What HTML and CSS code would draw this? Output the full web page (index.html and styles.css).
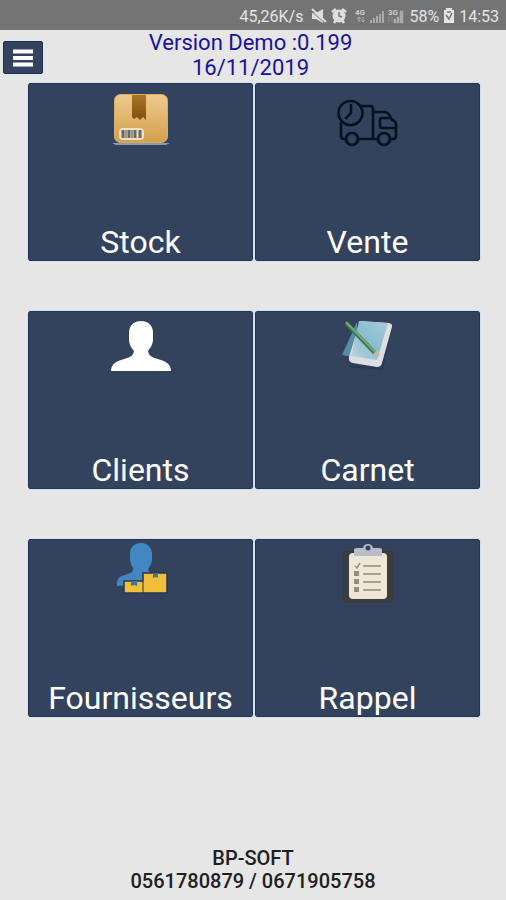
FILE: index.html
```html
<!DOCTYPE html>
<html lang="fr">
<head>
<meta charset="utf-8">
<meta name="viewport" content="width=device-width, initial-scale=1">
<title>BP-SOFT</title>
<link rel="stylesheet" href="styles.css">
</head>
<body>
<div class="status">
  <span class="speed">45,26K/s</span>
  <svg class="status-icon" width="16" height="16" viewBox="0 0 16 16" aria-hidden="true"><path d="M1 5h4l7-4v14l-7-4H1z" fill="#dedede"/><path d="M0 3l14 12" stroke="#747474" stroke-width="1"/><path d="M1 1l14 13" stroke="#dedede" stroke-width="2"/></svg>
  <svg class="status-icon" width="16" height="16" viewBox="0 0 16 16" aria-hidden="true"><path d="M1 4l4-3M15 4l-4-3M3 15l2-3M13 15l-2-3" stroke="#dedede" stroke-width="2.5"/><circle cx="8" cy="8" r="6.5" fill="#dedede"/><path d="M8 4v4l3 1" fill="none" stroke="#747474" stroke-width="1.5"/></svg>
  <svg class="status-icon network" width="50" height="16" viewBox="0 0 50 16" aria-hidden="true">
    <text class="network-label" x="0" y="7">4G</text>
    <path d="M4 9v5M2 11l2-2 2 2M8 9v5M6 12l2 2 2-2" fill="none" stroke="#aaa"/>
    <path d="M15 15v-3h2v3zM18 15v-5h2v5zM21 15V8h2v7zM24 15V6h2v9zM27 15V3h2v12z" fill="#aaa"/>
    <text class="network-label" x="33" y="7">3G</text>
    <path d="M34 9v5M37 9v5M39 15v-4h2v4zM42 15V9h2v6zM45 15V3h3v12z" fill="#aaa" stroke="#aaa" stroke-width=".5"/>
  </svg>
  <span>58%</span>
  <svg class="status-icon" width="12" height="16" viewBox="0 0 12 16" aria-hidden="true"><path d="M3 2V0h6v2h2v13H1V2z" fill="#e4e4e4"/><path d="M3 7l3 4 3-6M4 4h4" fill="none" stroke="#747474" stroke-width="1.5"/></svg>
  <span>14:53</span>
</div>

<header class="header">
  <button class="menu" type="button" aria-label="Menu">
    <svg width="20" height="18" viewBox="0 0 20 18" aria-hidden="true"><path d="M0 2.5h20M0 9h20M0 15.500h20" stroke="#fff" stroke-width="4"/></svg>
  </button>
  <h1 class="title">Version Demo :0.199<br>16/11/2019</h1>
</header>

<main class="tiles">
  <button class="tile" type="button">
    <svg class="tile-icon" width="60" height="60" viewBox="0 0 60 60" aria-hidden="true">
      <defs>
        <linearGradient id="box" x2="0" y2="1"><stop stop-color="#edca8d"/><stop offset="1" stop-color="#d4a04b"/></linearGradient>
        <linearGradient id="ribbon" x2="0" y2="1"><stop stop-color="#ac7427"/><stop offset="1" stop-color="#80500e"/></linearGradient>
      </defs>
      <path d="M1 53h58l-4 2H5z" fill="#8d9aaa"/>
      <rect x="3.500" y="4.500" width="53" height="48" rx="6" fill="url(#box)" stroke="#d9ae63"/>
      <path d="M21 5h14v25l-3-3-3 3-3-3-3 2-2-2z" fill="url(#ribbon)"/>
      <rect x="8" y="38" width="25" height="12" rx="4" fill="#efe0c2"/>
      <path d="M12 40v8M18 40v8M24 40v8M29 40v8" stroke="#696963" stroke-width="3"/>
      <path d="M15 40v8M21 40v8" stroke="#9b978d" stroke-width="2"/>
    </svg>
    <span>Stock</span>
  </button>
  <button class="tile" type="button">
    <svg class="tile-icon" width="60" height="60" viewBox="1 0 60 60" aria-hidden="true" fill="none" stroke="#07101d" stroke-width="2.600" stroke-linecap="round" stroke-linejoin="round">
      <circle cx="13.500" cy="23" r="12"/>
      <path d="M14 15v8l-5 5M24 16h9q3 0 3 3v30H22M4 33v13q0 3 3 3h2M36 22h11q4 0 6 4l2 4q4 1 4 5v11q0 3-3 3h-2M41 49h-5M54 28H45q-2 0-2 2v6q0 2 2 2h13"/>
      <circle cx="15" cy="49" r="6"/><circle cx="47" cy="49" r="6"/>
    </svg>
    <span>Vente</span>
  </button>
  <button class="tile" type="button">
    <svg class="tile-icon" width="60" height="60" viewBox="0 1 60 60" aria-hidden="true"><path d="M30 4c8 0 12 5 12 12v6c0 6-3 9-5 12 1 6 6 7 13 9 6 2 10 5 10 11H0c0-6 4-9 10-11 7-2 12-3 13-9-3-3-5-7-5-12v-6C18 9 22 4 30 4z" fill="#fff"/></svg>
    <span>Clients</span>
  </button>
  <button class="tile" type="button">
    <svg class="tile-icon" width="60" height="60" viewBox="1 2 60 60" aria-hidden="true">
      <defs><linearGradient id="sheet" x1="1" x2="0" y2="1"><stop stop-color="#a8ced9"/><stop offset=".5" stop-color="#8abcd0"/><stop offset="1" stop-color="#bfd5df"/></linearGradient></defs>
      <path d="M12 50l33 3 10-44" fill="none" stroke="#2b3a53" stroke-width="2"/>
      <path d="M20 6L5 39l16 3z" fill="#568da8"/>
      <path d="M23 5l29 2q4 1 3 4L45 47q-1 4-5 4l-24-4q-5-1-4-6z" fill="#dedfe2"/>
      <path d="M22 5l29 2-11 37-26-4z" fill="url(#sheet)"/>
      <path d="M9 7l29 30" stroke="#3e7349" stroke-width="4"/>
      <path d="M9 6l29 30" stroke="#75ad78" stroke-width="2"/>
      <path d="M40 34l3 6-7-2z" fill="#d0b490"/>
    </svg>
    <span>Carnet</span>
  </button>
  <button class="tile" type="button">
    <svg class="tile-icon" width="60" height="60" viewBox="0 7 60 60" aria-hidden="true">
      <path d="M30 4c7 0 11 5 11 11v5c0 5-3 8-4 11l4 5-13 9-22 2c-1-7 3-10 8-11 6-2 9-3 8-7-2-3-3-6-3-10v-4C19 8 23 4 30 4z" fill="#4387c2"/>
      <path d="M13 42h19v-8h24v20H13z" fill="#f2bf3d" stroke="#273650" stroke-width="1.500"/>
      <path d="M32 42v12" stroke="#273650"/>
      <path d="M20 42h6v5l-3-1-3 1zM42 34h5v5l-2-1-3 1z" fill="#45768c"/>
    </svg>
    <span>Fournisseurs</span>
  </button>
  <button class="tile" type="button">
    <svg class="tile-icon" width="60" height="60" viewBox="0 4 60 60" aria-hidden="true">
      <path d="M5 9h50v52H5z" fill="#3d3c3d"/>
      <rect x="11" y="11" width="38" height="46" rx="4" fill="#eee7d7"/>
      <path d="M16 14V8q0-2 3-2h6q1-4 5-4t5 4h6q3 0 3 2v6z" fill="#b9bec8"/>
      <circle cx="30" cy="6" r="2.500" fill="#33445f"/>
      <path d="M25 24h18M25 32h18M25 40h18M25 48h18" stroke="#aaa08d" stroke-width="2"/>
      <path d="M17 24l2 2 3-5" fill="none" stroke="#999684" stroke-width="1.500"/>
      <path d="M16 29h5v5h-5zM16 37h5v5h-5zM16 45h5v5h-5z" fill="#978d7c"/>
    </svg>
    <span>Rappel</span>
  </button>
</main>

<footer class="footer">BP-SOFT<br>0561780879 / 0671905758</footer>
</body>
</html>
```
FILE: styles.css
```css
* {
  box-sizing: border-box;
}

body {
  margin: 0;
  min-height: 100vh;
  display: flex;
  flex-direction: column;
  background: #e6e6e6;
  font-family: Roboto, "Liberation Sans", sans-serif;
}

.status {
  display: flex;
  align-items: center;
  justify-content: flex-end;
  height: 30px;
  padding: 2px 7px 0 0;
  background: #747474;
  color: #e4e4e4;
  font-size: 16px;
  gap: 4px;
}

.status-icon {
  flex: none;
}

.speed {
  margin-right: 4px;
}

.network {
  margin-left: 4px;
}

.network-label {
  fill: #ccc;
  font-size: 8px;
  font-weight: 700;
}

.header {
  display: grid;
  grid-template-columns: 40px 1fr 40px;
  align-items: start;
  height: 53px;
  padding: 0 8px 0 3px;
}

.menu {
  display: flex;
  align-items: center;
  justify-content: center;
  height: 33px;
  margin: 11px 0 0;
  padding: 0;
  border: 1px solid #1d2f52;
  border-radius: 2px;
  background: #33435f;
}

.title {
  margin: 0;
  color: #1a129c;
  font-size: 22px;
  font-weight: 400;
  line-height: 25px;
  text-align: center;
}

.tiles {
  display: grid;
  grid-template-columns: 1fr 1fr;
  gap: 50px 2px;
  padding: 0 26px 0 28px;
}

.tile {
  display: flex;
  flex-direction: column;
  align-items: center;
  justify-content: space-between;
  height: 178px;
  padding: 6px 0 0;
  border: 1px solid #203758;
  border-radius: 2px;
  outline: 1px solid #d5e0e9;
  background: #33435e;
  color: #fff;
  font-family: inherit;
  font-size: 32px;
  line-height: 36px;
}

.tile-icon {
  overflow: visible;
}

.footer {
  margin-top: auto;
  padding: 0 0 7px;
  color: #202020;
  font-size: 20px;
  font-weight: 500;
  line-height: 23px;
  text-align: center;
}
```
